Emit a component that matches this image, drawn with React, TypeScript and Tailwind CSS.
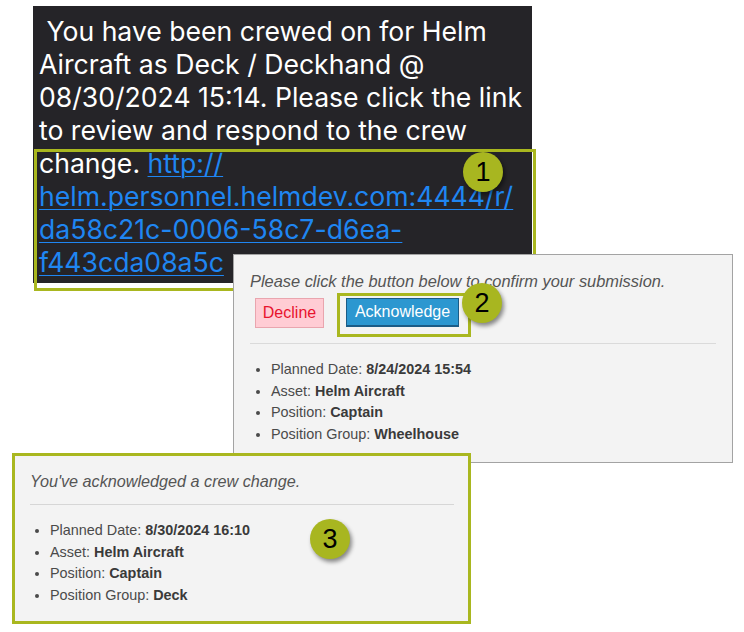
import React from "react";

const olive = "border-[#a9b71f]";

function Badge({ n, className }: { n: string; className: string }) {
  return (
    <div
      className={`absolute flex h-[40px] w-[40px] items-center justify-center rounded-full bg-[#a8b620] text-[27px] leading-none text-black shadow-[2px_3px_4px_rgba(0,0,0,0.45)] ${className}`}
      style={{ fontFamily: '"Liberation Sans", Arial, sans-serif' }}
    >
      {n}
    </div>
  );
}

function Details({ date, group }: { date: string; group: string }) {
  const items: [string, string][] = [
    ["Planned Date: ", date],
    ["Asset: ", "Helm Aircraft"],
    ["Position: ", "Captain"],
    ["Position Group: ", group],
  ];
  return (
    <ul className="list-disc pl-[20px] text-[14.4px] leading-[21.7px] text-[#4a4a4a]">
      {items.map(([k, v]) => (
        <li key={k}>
          {k}
          <b className="font-bold text-[#3a3a3a]">{v}</b>
        </li>
      ))}
    </ul>
  );
}

export default function App() {
  return (
    <div
      className="relative h-[632px] w-[744px] overflow-hidden bg-white"
      style={{ fontFamily: '"Liberation Sans", Arial, sans-serif' }}
    >
      {/* SMS message */}
      <div
        className="absolute left-[33px] top-[6px] h-[277px] w-[499px] bg-[#252428] pl-[6px] pt-[9px] text-[26.6px] leading-[33px] text-white"
        style={{ fontFamily: "Inter, sans-serif" }}
      >
        &nbsp;You have been crewed on for Helm
        <br />
        Aircraft as Deck / Deckhand @
        <br />
        08/30/2024 15:14. Please click the link
        <br />
        to review and respond to the crew
        <br />
        change.{" "}
        <span className="text-[#1f86f2] underline decoration-1 underline-offset-[3px]">
          http://
          <br />
          helm.personnel.helmdev.com:4444/r/
          <br />
          da58c21c-0006-58c7-d6ea-
          <br />
          f443cda08a5c
        </span>
      </div>
      <div className={`absolute left-[34px] top-[149px] h-[142px] w-[502px] border-[3px] ${olive}`} />
      <Badge n="1" className="left-[463px] top-[152px]" />

      {/* Confirm panel */}
      <div className="absolute left-[233px] top-[254px] h-[209px] w-[500px] border border-[#a3a3a3] bg-[#f3f3f3] pl-[16px] pr-[16px] pt-[17px]">
        <p className="text-[16.4px] italic leading-[18px] text-[#555]">
          Please click the button below to confirm your submission.
        </p>
        <div className="mt-[8px] flex h-[30px] items-start gap-[22px] pl-[5px]">
          <div className="flex h-[30px] w-[69px] items-center justify-center border border-[#e9a5ae] bg-[#ffccd4] text-[16px] text-[#e8132d]">
            Decline
          </div>
          <div className="flex h-[29px] w-[113px] items-center justify-center border border-b-2 border-[#1b5c86] bg-[#2c97d0] text-[16px] text-white">
            Acknowledge
          </div>
        </div>
        <div className="mt-[15px] h-px bg-[#dadada]" />
        <div className="mt-[15px] pl-[1px]">
          <Details date="8/24/2024 15:54" group="Wheelhouse" />
        </div>
      </div>
      <div className={`absolute left-[337px] top-[293px] h-[44px] w-[134px] border-[3px] ${olive}`} />
      <Badge n="2" className="left-[462px] top-[283px]" />

      {/* Acknowledged panel */}
      <div className={`absolute left-[12px] top-[453px] h-[171px] w-[459px] border-[3px] ${olive} bg-[#f3f3f3] pl-[15px] pr-[14px] pt-[16px]`}>
        <p className="text-[16.2px] italic leading-[18px] text-[#555]">
          You've acknowledged a crew change.
        </p>
        <div className="mt-[14px] h-px bg-[#d6d6d6]" />
        <div className="mt-[15px]">
          <Details date="8/30/2024 16:10" group="Deck" />
        </div>
      </div>
      <Badge n="3" className="left-[310px] top-[519px]" />
    </div>
  );
}
